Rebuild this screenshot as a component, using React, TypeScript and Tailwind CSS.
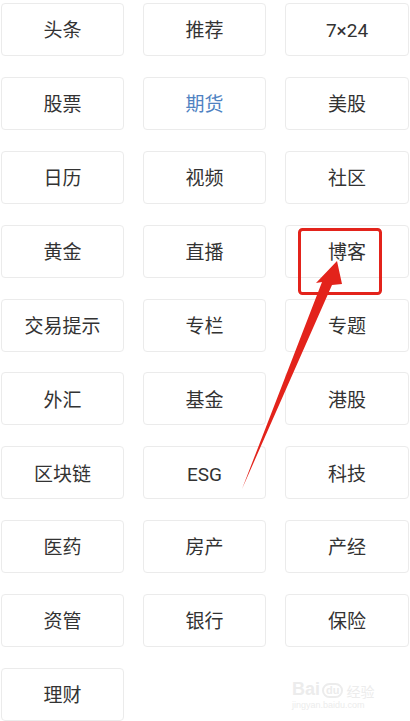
import React from "react";

const items: { label: string; active?: boolean }[] = [
  { label: "头条" }, { label: "推荐" }, { label: "7×24" },
  { label: "股票" }, { label: "期货", active: true }, { label: "美股" },
  { label: "日历" }, { label: "视频" }, { label: "社区" },
  { label: "黄金" }, { label: "直播" }, { label: "博客" },
  { label: "交易提示" }, { label: "专栏" }, { label: "专题" },
  { label: "外汇" }, { label: "基金" }, { label: "港股" },
  { label: "区块链" }, { label: "ESG" }, { label: "科技" },
  { label: "医药" }, { label: "房产" }, { label: "产经" },
  { label: "资管" }, { label: "银行" }, { label: "保险" },
  { label: "理财" },
];

export default function App() {
  return (
    <div
      className="relative w-[410px] h-[721px] overflow-hidden bg-white"
      style={{ fontFamily: 'Roboto, "Noto Sans CJK SC", sans-serif' }}
    >
      <div className="grid grid-cols-[123px_123px_124px] gap-x-[19px] gap-y-[20.9px] pl-[1px] pt-[3px]">
        {items.map((it) => (
          <div
            key={it.label}
            className={`h-[53px] pt-[4px] flex items-center justify-center rounded-[4px] border border-[#ebebeb] text-[19px] ${
              it.active ? "text-[#4f82c2]" : "text-[#333333]"
            }`}
          >
            {it.label}
          </div>
        ))}
      </div>

      {/* watermark */}
      <div className="absolute left-[292px] top-[680px] text-[#ececec] pointer-events-none">
        <div className="flex items-end leading-none">
          <span className="text-[18px] font-bold" style={{ fontFamily: '"Liberation Sans", sans-serif' }}>Bai</span>
          <span className="ml-[2px] text-[11px] font-bold rounded-full border-2 border-[#ececec] px-[2px]" style={{ fontFamily: '"Liberation Sans", sans-serif' }}>du</span>
          <span className="ml-[3px] text-[14px]" style={{ fontFamily: '"Noto Sans CJK SC", sans-serif' }}>经验</span>
        </div>
        <div className="text-[9px] leading-none mt-[3px]" style={{ fontFamily: '"Liberation Sans", sans-serif' }}>jingyan.baidu.com</div>
      </div>

      {/* annotation */}
      <svg className="absolute inset-0 pointer-events-none" width="410" height="721" viewBox="0 0 410 721">
        <rect x="299.5" y="229.5" width="81" height="64" rx="3" fill="none" stroke="#e3231b" strokeWidth="3" />
        <polygon
          points="337,261 342,284 332,285 242,489 322,282 316,283"
          fill="#e3231b"
        />
      </svg>
    </div>
  );
}
